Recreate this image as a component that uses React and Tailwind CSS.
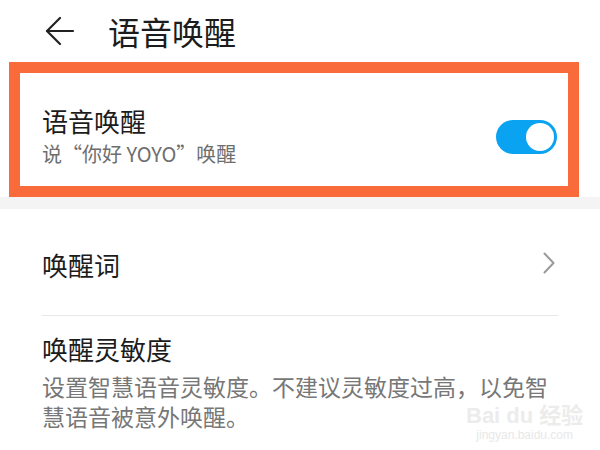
import React, { useState } from 'react';

const fontStack = { fontFamily: '"Noto Sans CJK SC", "Noto Sans", sans-serif' };

const BackArrow = () => (
  <svg width="30" height="30" viewBox="0 0 30 30" fill="none" stroke="#222" strokeWidth="2.2" strokeLinecap="round" strokeLinejoin="round">
    <path d="M28 15H2" />
    <path d="M15 2L2 15L15 28" />
  </svg>
);

const Chevron = () => (
  <svg width="12" height="22" viewBox="0 0 12 22" fill="none" stroke="#9a9a9a" strokeWidth="2" strokeLinecap="round" strokeLinejoin="round">
    <path d="M1.5 1.5L10.5 11L1.5 20.5" />
  </svg>
);

const Toggle = ({ on, onChange }) => (
  <button
    type="button"
    onClick={() => onChange(!on)}
    className={`relative w-[61px] h-[34px] rounded-full ${on ? 'bg-[#0aa3f2]' : 'bg-[#d0d0d0]'}`}
  >
    <span
      className={`absolute top-[3px] w-[28px] h-[28px] rounded-full bg-white ${on ? 'right-[3px]' : 'left-[3px]'}`}
    />
  </button>
);

export default function App() {
  const [wakeOn, setWakeOn] = useState(true);

  return (
    <div className="relative w-[600px] h-[450px] overflow-hidden bg-white" style={fontStack}>
      {/* header */}
      <div className="flex items-center h-[62px] pl-[45px]">
        <BackArrow />
        <span className="ml-[33px] text-[32px] leading-[40px] text-[#1c1c1c]">语音唤醒</span>
      </div>

      {/* highlighted wake toggle */}
      <div className="ml-[9px] mr-[21px] border-[11px] border-[#f96b3b] bg-white">
        <div className="flex justify-between h-[113px] pl-[22px] pr-[11px]">
          <div className="pt-[32px]">
            <div className="text-[26px] leading-[32px] text-[#1c1c1c]">语音唤醒</div>
            <div className="text-[20px] leading-[33px] text-[#6e6e6e]">说“你好 YOYO”唤醒</div>
          </div>
          <div className="pt-[47px]">
            <Toggle on={wakeOn} onChange={setWakeOn} />
          </div>
        </div>
      </div>

      <div className="h-[12px] bg-[#f4f4f4]" />

      {/* settings list */}
      <div className="px-[42px]">
        <div className="flex items-center justify-between h-[107px] pt-[6px] border-b border-[#e8e8e8]">
          <span className="text-[26px] leading-[32px] text-[#1c1c1c]">唤醒词</span>
          <span className="mr-[3px] -mt-[4px]">
            <Chevron />
          </span>
        </div>
        <div className="pt-[17px]">
          <div className="text-[26px] leading-[32px] text-[#1c1c1c]">唤醒灵敏度</div>
          <div className="mt-[6px] flex flex-col items-start text-[23px] leading-[30px] text-[#777777]">
            <span>设置智慧语音灵敏度。不建议灵敏度过高，以免智</span>
            <span>慧语音被意外唤醒。</span>
          </div>
        </div>
      </div>

      {/* watermark */}
      <div className="absolute left-[466px] top-[404px] flex flex-col items-center pointer-events-none">
        <span className="text-[22px] leading-[24px] font-bold text-[#ececec]" style={{ fontFamily: '"Liberation Sans", "Noto Sans CJK SC", sans-serif' }}>
          Bai du 经验
        </span>
        <span className="text-[12px] leading-[14px] text-[#e8e8e8]" style={{ fontFamily: '"Liberation Sans", sans-serif' }}>
          jingyan.baidu.com
        </span>
      </div>
    </div>
  );
}
